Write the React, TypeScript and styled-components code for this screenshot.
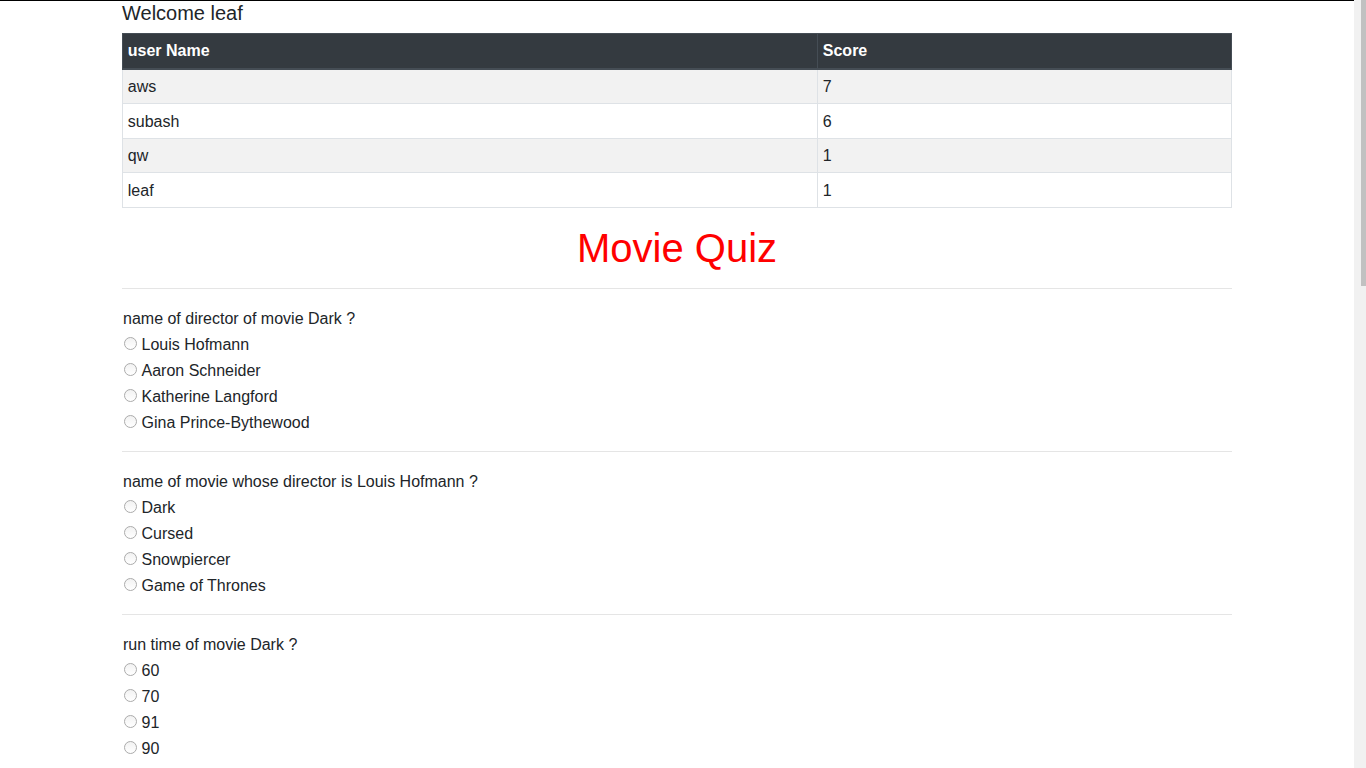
import React from "react";
import styled, { createGlobalStyle } from "styled-components";

const GlobalStyle = createGlobalStyle`
  html, body {
    margin: 0;
    padding: 0;
  }
  body {
    font-family: "Liberation Sans", Arial, Helvetica, sans-serif;
    font-size: 16px;
    line-height: 1.5;
    color: #212529;
    background: #ffffff;
  }
  * { box-sizing: border-box; }
`;

const Shell = styled.div`
  display: grid;
  grid-template-columns: 1fr 12px;
  align-items: start;
`;

const ScrollTrack = styled.div`
  position: sticky;
  top: 0;
  height: 768px;
  background: #f1f1f1;
  display: flex;
  justify-content: flex-end;
`;

const ScrollThumb = styled.div`
  width: 5px;
  height: 286px;
  background: #c1c1c1;
`;

const Page = styled.div`
  border-top: 1px solid #000000;
  min-height: 768px;
`;

const Container = styled.div`
  max-width: 1140px;
  margin: 0 auto;
  padding: 0 15px;
`;

const Welcome = styled.h5`
  margin: 0 0 8px;
  font-size: 20px;
  font-weight: 400;
  line-height: 24px;
  color: #212529;
`;

const Table = styled.table`
  width: 100%;
  border-collapse: collapse;
  margin-bottom: 16px;
  color: #212529;
`;

const HeadCell = styled.th`
  background: #343a40;
  color: #ffffff;
  border: 1px solid #454d55;
  border-bottom-width: 2px;
  padding: 4.8px;
  text-align: left;
  font-weight: 700;
  vertical-align: bottom;
`;

const Row = styled.tr<{ $striped: boolean }>`
  background: ${(p) => (p.$striped ? "#f2f2f2" : "#ffffff")};
`;

const Cell = styled.td`
  border: 1px solid #dee2e6;
  padding: 5.4px 4.8px 4.2px;
  vertical-align: top;
`;

const Title = styled.h1`
  margin: 0;
  text-align: center;
  font-size: 40px;
  font-weight: 400;
  line-height: 48px;
  color: #ff0000;
`;

const Rule = styled.hr`
  margin: 16px 0;
  border: 0;
  border-top: 1px solid rgba(0, 0, 0, 0.1);
`;

const Question = styled.div`
  display: flex;
  flex-direction: column;
  padding-top: 1px;
  margin-bottom: -1px;
`;

const QuestionText = styled.div`
  padding-left: 1px;
  line-height: 26px;
  height: 26px;
`;

const Option = styled.label`
  display: flex;
  align-items: center;
  height: 26px;
  line-height: 24px;
`;

const Radio = styled.input`
  appearance: none;
  -webkit-appearance: none;
  width: 13px;
  height: 13px;
  margin: -2px 5px 0 1.5px;
  border-radius: 50%;
  border: 1px solid #ababab;
  background: linear-gradient(#f2f2f2, #ffffff);
  flex-shrink: 0;
`;

const scores = [
  { name: "aws", score: 7 },
  { name: "subash", score: 6 },
  { name: "qw", score: 1 },
  { name: "leaf", score: 1 },
];

const questions = [
  {
    q: "name of director of movie Dark ?",
    options: ["Louis Hofmann", "Aaron Schneider", "Katherine Langford", "Gina Prince-Bythewood"],
  },
  {
    q: "name of movie whose director is Louis Hofmann ?",
    options: ["Dark", "Cursed", "Snowpiercer", "Game of Thrones"],
  },
  {
    q: "run time of movie Dark ?",
    options: ["60", "70", "91", "90"],
  },
];

export default function App() {
  return (
    <Shell>
      <GlobalStyle />
      <Page>
        <Container>
          <Welcome>Welcome leaf</Welcome>
          <Table>
            <colgroup>
              <col style={{ width: "695px" }} />
              <col />
            </colgroup>
            <thead>
              <tr>
                <HeadCell>user Name</HeadCell>
                <HeadCell>Score</HeadCell>
              </tr>
            </thead>
            <tbody>
              {scores.map((s, i) => (
                <Row key={s.name} $striped={i % 2 === 0}>
                  <Cell>{s.name}</Cell>
                  <Cell>{s.score}</Cell>
                </Row>
              ))}
            </tbody>
          </Table>
          <Title>Movie Quiz</Title>
          <Rule />
          {questions.map((q, qi) => (
            <React.Fragment key={qi}>
              <Question>
                <QuestionText>{q.q}</QuestionText>
                {q.options.map((o) => (
                  <Option key={o}>
                    <Radio type="radio" name={`q${qi}`} value={o} />
                    {o}
                  </Option>
                ))}
              </Question>
              <Rule />
            </React.Fragment>
          ))}
        </Container>
      </Page>
      <ScrollTrack>
        <ScrollThumb />
      </ScrollTrack>
    </Shell>
  );
}
